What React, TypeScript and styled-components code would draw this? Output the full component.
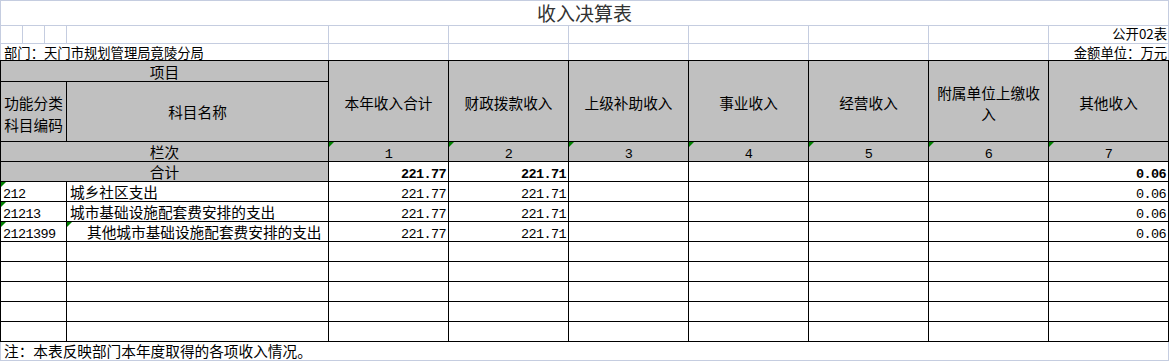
import React from 'react'
import styled, { createGlobalStyle, css } from 'styled-components'

const grid = '#c5cde0'
const ink = '#000'
const fill = '#c0c0c0'
const cjk = '"Noto Sans CJK SC", "Noto Sans", sans-serif'
const mono = '"Liberation Mono", "Noto Sans CJK SC", monospace'

const GlobalStyle = createGlobalStyle`
  * { box-sizing: border-box; }
  body {
    margin: 0;
    background: #fff;
    color: ${ink};
    font-family: ${cjk};
  }
`

const Sheet = styled.div`
  width: 1169px;
`

/* light grid part above the table */
const TopGrid = styled.table`
  width: 1169px;
  table-layout: fixed;
  border-collapse: separate;
  border-spacing: 0;
  border-top: 1px solid ${grid};
  border-left: 1px solid ${grid};
`

const TopRow = styled.tr<{ $h: number }>`
  height: ${p => p.$h}px;
`

const TopCell = styled.td<{ $align?: string; $open?: boolean; $lift?: number }>`
  padding: 0 1px ${p => p.$lift || 0}px;
  border-right: 1px solid ${grid};
  border-bottom: ${p => (p.$open ? 'none' : `1px solid ${grid}`)};
  font-size: 13.33px;
  line-height: 15px;
  vertical-align: bottom;
  text-align: ${p => p.$align || 'left'};
  white-space: nowrap;
`

const Title = styled(TopCell)`
  font-size: 19px;
  line-height: 24px;
  color: #333;
  text-align: center;
`

/* black bordered table */
const Grid = styled.table`
  width: 1169px;
  table-layout: fixed;
  border-collapse: separate;
  border-spacing: 0;
  border-top: 1px solid ${ink};
  border-left: 1px solid ${ink};
`

const Row = styled.tr<{ $h?: number }>`
  height: ${p => p.$h || 20}px;
`

const mark = css`
  &::before {
    content: '';
    position: absolute;
    top: 0;
    left: 0;
    border-top: 5px solid #008000;
    border-right: 5px solid transparent;
  }
`

const Base = styled.td<{ $mark?: boolean }>`
  position: relative;
  padding: 0 3px;
  border-right: 1px solid ${ink};
  border-bottom: 1px solid ${ink};
  font-size: 14.67px;
  line-height: 18px;
  white-space: nowrap;
  overflow: hidden;
  ${p => p.$mark && mark}
`

const Head = styled(Base)<{ $top?: number; $lh?: number }>`
  background: ${fill};
  text-align: center;
  vertical-align: middle;
  padding-top: ${p => p.$top || 0}px;
  line-height: ${p => p.$lh || 18}px;
  white-space: normal;
`

const Text = styled(Base)<{ $indent?: number }>`
  background: #fff;
  vertical-align: middle;
  padding-left: ${p => p.$indent || 3}px;
`

const Num = styled(Base)<{ $bold?: boolean; $align?: string; $gray?: boolean }>`
  background: ${p => (p.$gray ? fill : '#fff')};
  font-family: ${mono};
  font-size: 13.5px;
  letter-spacing: -0.6px;
  line-height: 12px;
  vertical-align: bottom;
  padding: 0 2px;
  font-weight: ${p => (p.$bold ? 700 : 400)};
  text-align: ${p => p.$align || 'right'};
`

const Footer = styled.div`
  height: 19px;
  padding-left: 3px;
  border: 1px solid ${grid};
  border-top: none;
  font-size: 14.67px;
  line-height: 18px;
  white-space: nowrap;
`

const heads = ['本年收入合计', '财政拨款收入', '上级补助收入', '事业收入', '经营收入', '附属单位上缴收入', '其他收入']

const rows = [
  { code: '212', name: '城乡社区支出', indent: 3, nameMark: false },
  { code: '21213', name: '城市基础设施配套费安排的支出', indent: 3, nameMark: false },
  { code: '2121399', name: '其他城市基础设施配套费安排的支出', indent: 20, nameMark: true },
]

const sevenCols = Array.from({ length: 7 }, (_, i) => i)

const App = () => (
  <Sheet>
    <GlobalStyle />
    <TopGrid>
      <colgroup>
        <col style={{ width: 22 }} />
        <col style={{ width: 22 }} />
        <col style={{ width: 22 }} />
        <col style={{ width: 262 }} />
        {sevenCols.map(i => (
          <col key={i} style={{ width: 120 }} />
        ))}
      </colgroup>
      <tbody>
        <TopRow $h={25}>
          <Title colSpan={11}>收入决算表</Title>
        </TopRow>
        <TopRow $h={18}>
          <TopCell />
          <TopCell />
          <TopCell />
          <TopCell />
          {sevenCols.map(i => (
            <TopCell key={i} $align="right" $lift={2}>
              {i === 6 ? '公开02表' : ''}
            </TopCell>
          ))}
        </TopRow>
        <TopRow $h={16}>
          <TopCell colSpan={4} $open style={{ paddingLeft: 3 }}>
            部门：天门市规划管理局竟陵分局
          </TopCell>
          {sevenCols.map(i => (
            <TopCell key={i} $open $align="right">
              {i === 6 ? '金额单位：万元' : ''}
            </TopCell>
          ))}
        </TopRow>
      </tbody>
    </TopGrid>

    <Grid>
      <colgroup>
        <col style={{ width: 66 }} />
        <col style={{ width: 262 }} />
        {sevenCols.map(i => (
          <col key={i} style={{ width: 120 }} />
        ))}
      </colgroup>
      <tbody>
        <Row $h={20}>
          <Head colSpan={2} $top={2}>
            项目
          </Head>
          {heads.map(h =>
            h === '附属单位上缴收入' ? (
              <Head key={h} rowSpan={2} $top={4} $lh={21.5}>
                附属单位上缴收
                <br />入
              </Head>
            ) : (
              <Head key={h} rowSpan={2} $top={4}>
                {h}
              </Head>
            ),
          )}
        </Row>
        <Row $h={60}>
          <Head $lh={21.5} $top={4} style={{ paddingLeft: 0, paddingRight: 0 }}>
            功能分类
            <br />
            科目编码
          </Head>
          <Head>科目名称</Head>
        </Row>
        <Row>
          <Head colSpan={2}>栏次</Head>
          {sevenCols.map(i => (
            <Num key={i} $gray $mark $align="center">
              {i + 1}
            </Num>
          ))}
        </Row>
        <Row>
          <Head colSpan={2}>合计</Head>
          <Num $bold>221.77</Num>
          <Num $bold>221.71</Num>
          <Num />
          <Num />
          <Num />
          <Num />
          <Num $bold>0.06</Num>
        </Row>
        {rows.map(r => (
          <Row key={r.code}>
            <Num $mark $align="left">
              {r.code}
            </Num>
            <Text $mark={r.nameMark} $indent={r.indent}>
              {r.name}
            </Text>
            <Num>221.77</Num>
            <Num>221.71</Num>
            <Num />
            <Num />
            <Num />
            <Num />
            <Num>0.06</Num>
          </Row>
        ))}
        {Array.from({ length: 5 }, (_, k) => (
          <Row key={k}>
            <Text />
            <Text />
            {sevenCols.map(i => (
              <Num key={i} />
            ))}
          </Row>
        ))}
      </tbody>
    </Grid>
    <Footer>注：本表反映部门本年度取得的各项收入情况。</Footer>
  </Sheet>
)

export default App
